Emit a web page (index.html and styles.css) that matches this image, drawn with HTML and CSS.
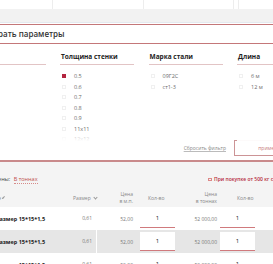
FILE: index.html
```html
<!DOCTYPE html>
<html lang="ru">
<head>
    <meta charset="UTF-8">
    <title>Каталог - профильная труба</title>
    <link rel="stylesheet" href="styles.css">
</head>
<body>
    <div class="top-tabs">
        <span class="tab tab-1"></span>
        <span class="tab tab-2"></span>
        <span class="tab tab-3"></span>
        <span class="tab tab-4"></span>
    </div>
    <div class="gray-band"></div>

    <!-- Filter -->
    <section class="filter">
        <div class="filter-title"><span>Выбрать параметры</span></div>
        <div class="filter-cols">
            <div class="fcol">
                <div class="fcol-head">&nbsp;</div>
            </div>
            <div class="fcol">
                <div class="fcol-head">Толщина стенки</div>
                <ul class="fcol-list">
                    <li><i class="check checked"></i>0.5</li>
                    <li><i class="check"></i>0.6</li>
                    <li><i class="check"></i>0.7</li>
                    <li><i class="check"></i>0.8</li>
                    <li><i class="check"></i>0.9</li>
                    <li><i class="check"></i>11x11</li>
                    <li><i class="check"></i>12x12</li>
                    <li><i class="check"></i>15x15</li>
                </ul>
            </div>
            <div class="fcol">
                <div class="fcol-head">Марка стали</div>
                <ul class="fcol-list">
                    <li><i class="check"></i>09Г2С</li>
                    <li><i class="check"></i>ст1-3</li>
                </ul>
            </div>
            <div class="fcol">
                <div class="fcol-head">Длина</div>
                <ul class="fcol-list">
                    <li><i class="check"></i>6 м</li>
                    <li><i class="check"></i>12 м</li>
                </ul>
            </div>
        </div>
        <div class="filter-actions">
            <a href="#" class="reset">Сбросить фильтр</a>
            <button class="apply">применить</button>
        </div>
    </section>

    <!-- Catalog table -->
    <section class="catalog">
        <div class="catalog-bar">
            <span class="prices">Цены: <a href="#">В тоннах</a></span>
            <span class="promo"><i class="promo-icon"></i>При покупке от 500 кг скидка</span>
        </div>
        <div class="grid grid-head">
            <div class="c-name">Наименование <b class="chev"></b></div>
            <div class="c-size">Размер <b class="chev"></b></div>
            <div class="c-price">Цена<br>в м.п.</div>
            <div class="c-qty">Кол-во</div>
            <div class="c-price2">Цена<br>в тоннах</div>
            <div class="c-qty2">Кол-во</div>
            <div class="c-last"></div>
        </div>
        <div class="grid row">
            <div class="c-name">Размер 15*15*1,5</div>
            <div class="c-size">0,61</div>
            <div class="c-price">52,00</div>
            <div class="c-qty"><input class="qty" value="1"></div>
            <div class="c-price2">52 000,00</div>
            <div class="c-qty2"><input class="qty" value="1"></div>
            <div class="c-last">52 000,00</div>
        </div>
        <div class="grid row row-alt">
            <div class="c-name">Размер 15*15*1,5</div>
            <div class="c-size">0,61</div>
            <div class="c-price">52,00</div>
            <div class="c-qty"><input class="qty" value="1"></div>
            <div class="c-price2">52 000,00</div>
            <div class="c-qty2"><input class="qty" value="1"></div>
            <div class="c-last">52 000,00</div>
        </div>
        <div class="grid row">
            <div class="c-name">Размер 15*15*1,5</div>
            <div class="c-size">0,61</div>
            <div class="c-price">52,00</div>
            <div class="c-qty"><input class="qty" value="1"></div>
            <div class="c-price2">52 000,00</div>
            <div class="c-qty2"><input class="qty" value="1"></div>
            <div class="c-last">52 000,00</div>
        </div>
    </section>
</body>
</html>
```

FILE: styles.css
```css
/* Global */
* {
    margin: 0;
    padding: 0;
    box-sizing: border-box;
}

html, body {
    width: 273px;
    height: 264px;
    overflow: hidden;
}

body {
    font-family: "Open Sans", "Liberation Sans", sans-serif;
    background-color: #fff;
    color: #333;
}

/* Top strip */
.top-tabs {
    display: flex;
    height: 9px;
}

.tab {
    border-right: 1px solid #ededed;
}

.tab-1 { width: 53px; }
.tab-2 { width: 91px; }
.tab-3 { width: 90px; }
.tab-4 { width: 5px; }

.gray-band {
    height: 14px;
    background-color: #f2f2f2;
    border-bottom: 1px solid #e4e9ef;
}

/* Filter */
.filter {
    margin-top: 1px;
    border-bottom: 2px solid #c98a8b;
}

.filter-title {
    height: 20px;
    border-top: 1px solid #c47779;
    border-bottom: 1px solid #c47779;
    font-size: 8px;
    font-weight: 600;
    line-height: 18px;
    color: #333;
    white-space: nowrap;
}

.filter-title span {
    margin-left: -18.5px;
}

.filter-cols {
    display: flex;
    gap: 14.5px;
    margin-left: -28.5px;
}

.fcol {
    width: 74px;
    flex-shrink: 0;
}

.fcol-head {
    padding: 9px 0 3px 1px;
    font-size: 6.5px;
    font-weight: 700;
    line-height: 8px;
    color: #222;
    border-bottom: 1px solid #e2c4c5;
    white-space: nowrap;
}

.fcol-list {
    position: relative;
    list-style: none;
    height: 76px;
    padding-top: 6px;
    overflow: hidden;
}

.fcol-list::after {
    content: "";
    position: absolute;
    left: 0;
    right: 0;
    bottom: 0;
    height: 8px;
    background: linear-gradient(rgba(255, 255, 255, 0.3), #fff);
}

.fcol-list li {
    display: flex;
    align-items: center;
    height: 10.5px;
    font-size: 5.5px;
    color: #6a6a6a;
}

.check {
    width: 4px;
    height: 4px;
    margin: 0 8px 0 2px;
    border: 1px solid #f0f0f0;
}

.check.checked {
    background-color: #b3243f;
    border-color: #b3243f;
}

.filter-actions {
    display: flex;
    justify-content: flex-end;
    align-items: center;
    gap: 8px;
    height: 16px;
    margin: -1px -37px 4px 0;
}

.reset {
    font-size: 5px;
    color: #888;
    text-decoration: underline;
    text-decoration-color: #bbb;
}

.apply {
    width: 76px;
    height: 16px;
    background-color: #fff;
    border: 1px solid #cc9496;
    color: #c77b7e;
    font-family: inherit;
    font-size: 5px;
}

/* Catalog */
.catalog {
    background-color: #f4f4f4;
    min-height: 120px;
}

.catalog-bar {
    display: flex;
    align-items: center;
    height: 27px;
    padding-top: 7px;
    font-size: 5.5px;
    white-space: nowrap;
}

.prices {
    width: 214px;
    flex-shrink: 0;
    margin-left: -6px;
    color: #444;
}

.prices a {
    color: #c0504d;
    text-decoration: none;
    border-bottom: 1px dotted #d68b8a;
    margin-left: 2px;
}

.promo {
    display: flex;
    align-items: center;
    font-size: 5px;
    color: #b5283a;
    font-weight: 600;
}

.promo-icon {
    width: 4px;
    height: 3px;
    margin-right: 2px;
    border: 1px solid #d88;
}

/* Table grid */
.grid {
    display: grid;
    grid-template-columns: 70px 33px 40px 41px 41px 40px 41px;
    margin-left: -6px;
    align-items: center;
}

.grid-head {
    height: 18px;
    font-size: 5px;
    line-height: 7px;
    color: #888;
}

.grid-head .c-name {
    display: flex;
    justify-content: flex-end;
    align-items: center;
    padding-right: 60px;
    white-space: nowrap;
}

.grid-head .c-size {
    text-align: right;
    white-space: nowrap;
}

.grid-head .c-price {
    text-align: right;
    padding-right: 4px;
}

.grid-head .c-qty {
    padding-left: 11px;
}

.grid-head .c-price2 {
    text-align: right;
    padding-right: 2px;
    white-space: nowrap;
}

.grid-head .c-qty2 {
    padding-left: 18px;
}

.chev {
    display: inline-block;
    width: 3px;
    height: 3px;
    margin: 0 0 1px 2px;
    border-right: 1px solid #999;
    border-bottom: 1px solid #999;
    transform: rotate(45deg);
}

.row {
    height: 23px;
    background-color: #fff;
    font-size: 5px;
    color: #777;
}

.row-alt {
    background-color: #e6e6e6;
}

.row .c-name {
    padding-left: 2px;
    font-size: 5.5px;
    font-weight: 700;
    color: #222;
    white-space: nowrap;
}

.row .c-size,
.row .c-price,
.row .c-price2,
.row .c-last {
    text-align: right;
    padding-right: 4px;
    white-space: nowrap;
}

.row .c-size {
    border-right: 1px solid #fff;
    height: 100%;
    line-height: 23px;
}

.row .c-price2 {
    padding-right: 2px;
}

.row .c-qty {
    padding: 0 3px;
}

.row .c-qty2 {
    padding: 0 4px 0 1px;
}

.qty {
    display: block;
    width: 100%;
    height: 19px;
    background-color: #fff;
    border: none;
    border-bottom: 1px solid #d07a7d;
    text-align: center;
    font-family: inherit;
    font-size: 6px;
    color: #222;
    outline: none;
}
```
